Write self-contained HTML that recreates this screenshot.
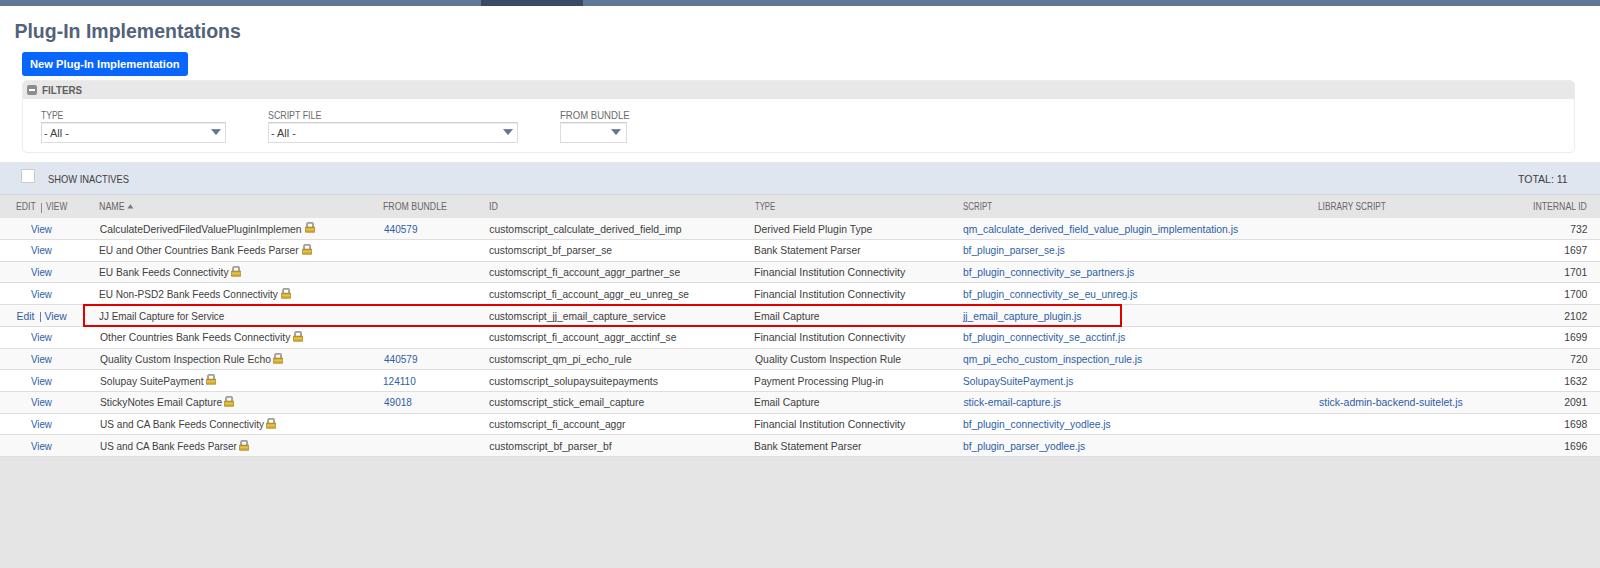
<!DOCTYPE html>
<html><head><meta charset="utf-8">
<style>
*{box-sizing:border-box;margin:0;padding:0}
html,body{width:1600px;height:568px;overflow:hidden;background:#fff;font-family:"Liberation Sans",sans-serif;color:#333}
.t{position:absolute;white-space:nowrap;line-height:20px;transform-origin:0 0}
#topbar{position:absolute;left:0;top:0;width:1600px;height:6px;background:#607799}
#topseg{position:absolute;left:481px;top:0;width:102px;height:6px;background:#3b4a63}
#btn{position:absolute;left:22px;top:52px;width:166px;height:24px;background:#0866fc;border-radius:3px}
#filters{position:absolute;left:22px;top:80px;width:1553px;height:73px;border:1px solid #ececec;border-radius:5px;background:#fff;overflow:hidden}
#fhead{position:absolute;left:0;top:0;width:100%;height:18px;background:#e8e8e8}
#minus{position:absolute;left:4px;top:4px;width:10px;height:10px;background:#8c8c8c;border-radius:2px}
#minus:after{content:"";position:absolute;left:2px;top:3.5px;width:6px;height:2px;background:#fff}
.sel{position:absolute;height:20.5px;border:1px solid #dcdcdc;border-top-color:#cfcfcf;background:#fff;box-shadow:inset 0 1px 0 #ececec}
.arr{position:absolute;top:6px;width:10px;height:6px}
#band{position:absolute;left:0;top:162px;width:1600px;height:32px;background:#e0e6ef}
#chk{position:absolute;left:21px;top:169px;width:14px;height:14px;background:#fff;border:1px solid #c9cacc;border-radius:1px}
#thead{position:absolute;left:0;top:194px;width:1600px;height:24px;background:#e5e5e5;border-top:1px solid #d3d7dd}
.row{position:absolute;left:0;width:1600px;border-bottom:1px solid #dedede}
.odd{background:#f9f9f9}
.even{background:#fff}
#rest{position:absolute;left:0;top:457px;width:1600px;height:112px;background:#e5e5e5}
#red{position:absolute;left:83px;top:304px;width:1039px;height:23px;border:2px solid #e00000}
.lk{position:absolute;width:10px;height:11px;line-height:0}
.lk svg{display:block}
#sort{position:absolute;left:127px;top:204.1px}
</style></head><body>
<div id="topbar"></div><div id="topseg"></div>
<div id="btn"></div>
<div id="filters"><div id="fhead"><div id="minus"></div></div></div>
<div class="sel" style="left:41px;top:122px;width:185px"><svg class="arr" style="left:168.6px" viewBox="0 0 10 6"><path d="M0.3 0.2H9.7L5 5.8Z" fill="#5d7393" stroke="#5d7393" stroke-width="0.4" stroke-linejoin="round"/></svg></div>
<div class="sel" style="left:268px;top:122px;width:250px"><svg class="arr" style="left:233.6px" viewBox="0 0 10 6"><path d="M0.3 0.2H9.7L5 5.8Z" fill="#5d7393" stroke="#5d7393" stroke-width="0.4" stroke-linejoin="round"/></svg></div>
<div class="sel" style="left:560px;top:122px;width:67px"><svg class="arr" style="left:49.6px" viewBox="0 0 10 6"><path d="M0.3 0.2H9.7L5 5.8Z" fill="#5d7393" stroke="#5d7393" stroke-width="0.4" stroke-linejoin="round"/></svg></div>
<div id="band"></div>
<div id="chk"></div>
<div id="thead"></div>
<div style="position:absolute;left:40.5px;top:203px;width:1.2px;height:9.6px;background:#8c8c8c"></div>
<svg id="sort" width="7" height="5" viewBox="0 0 7 5"><path d="M0.4 4.6H6.4L3.4 0.3Z" fill="#7a7a7a"/></svg>
<div class="row odd" style="top:218px;height:22px"></div>
<div class="row even" style="top:240px;height:22px"></div>
<div class="row odd" style="top:262px;height:21px"></div>
<div class="row even" style="top:283px;height:22px"></div>
<div class="row odd" style="top:305px;height:22px"></div>
<div class="row even" style="top:327px;height:22px"></div>
<div class="row odd" style="top:349px;height:21px"></div>
<div class="row even" style="top:370px;height:22px"></div>
<div class="row odd" style="top:392px;height:22px"></div>
<div class="row even" style="top:414px;height:21px"></div>
<div class="row odd" style="top:435px;height:22px"></div>
<div id="rest"></div>
<div class=t style="left:14.40px;top:20.64px;font-size:19.5px;color:#53627a;font-weight:bold;">Plug-In Implementations</div>
<div class=t style="left:30.40px;top:54.09px;font-size:11px;color:#ffffff;font-weight:bold;transform:scaleX(1.0156);">New Plug-In Implementation</div>
<div class=t style="left:42.00px;top:79.96px;font-size:10.5px;color:#5f5f5f;font-weight:bold;transform:scaleX(0.9302);">FILTERS</div>
<div class=t style="left:41.00px;top:106.06px;font-size:10.2px;color:#6b6b6b;transform:scaleX(0.8385);">TYPE</div>
<div class=t style="left:267.70px;top:106.06px;font-size:10.2px;color:#6b6b6b;transform:scaleX(0.8672);">SCRIPT FILE</div>
<div class=t style="left:559.96px;top:106.06px;font-size:10.2px;color:#6b6b6b;transform:scaleX(0.9384);">FROM BUNDLE</div>
<div class=t style="left:44.20px;top:122.89px;font-size:11px;color:#404040;transform:scaleX(0.9920);">- All -</div>
<div class=t style="left:270.90px;top:122.89px;font-size:11px;color:#404040;transform:scaleX(0.9880);">- All -</div>
<div class=t style="left:47.50px;top:170.36px;font-size:10.2px;color:#404040;transform:scaleX(0.9170);">SHOW INACTIVES</div>
<div class=t style="left:1517.50px;top:170.26px;font-size:10.2px;color:#404040;transform:scaleX(1.0333);">TOTAL: 11</div>
<div class=t style="left:16.03px;top:196.63px;font-size:10px;color:#666666;transform:scaleX(0.8682);">EDIT</div>
<div class=t style="left:46.00px;top:196.63px;font-size:10px;color:#666666;transform:scaleX(0.8308);">VIEW</div>
<div class=t style="left:99.01px;top:196.63px;font-size:10px;color:#666666;transform:scaleX(0.8893);">NAME</div>
<div class=t style="left:383.22px;top:196.63px;font-size:10px;color:#666666;transform:scaleX(0.8778);">FROM BUNDLE</div>
<div class=t style="left:488.61px;top:196.63px;font-size:10px;color:#666666;transform:scaleX(0.8889);">ID</div>
<div class=t style="left:755.10px;top:196.63px;font-size:10px;color:#666666;transform:scaleX(0.7692);">TYPE</div>
<div class=t style="left:962.70px;top:196.63px;font-size:10px;color:#666666;transform:scaleX(0.7919);">SCRIPT</div>
<div class=t style="left:1318.17px;top:196.63px;font-size:10px;color:#666666;transform:scaleX(0.8284);">LIBRARY SCRIPT</div>
<div class=t style="left:1533.33px;top:196.63px;font-size:10px;color:#666666;transform:scaleX(0.8705);">INTERNAL ID</div>
<div class=t style="left:31.30px;top:219.69px;font-size:10.4px;color:#2d5ea6;transform:scaleX(0.9348);">View</div>
<div class=t style="left:99.70px;top:219.69px;font-size:10.4px;color:#404040;">CalculateDerivedFiledValuePluginImplemen</div>
<div class=t style="left:384.10px;top:219.69px;font-size:10.4px;color:#2d5ea6;transform:scaleX(0.9650);">440579</div>
<div class=t style="left:489.30px;top:219.69px;font-size:10.4px;color:#404040;">customscript_calculate_derived_field_imp</div>
<div class=t style="left:754.00px;top:219.69px;font-size:10.4px;color:#404040;">Derived Field Plugin Type</div>
<div class=t style="left:963.40px;top:219.69px;font-size:10.4px;color:#2d5ea6;transform:scaleX(0.9946);">qm_calculate_derived_field_value_plugin_implementation.js</div>
<div class=t style="left:1570.20px;top:219.69px;font-size:10.4px;color:#404040;">732</div>
<div class=t style="left:31.30px;top:241.41px;font-size:10.4px;color:#2d5ea6;transform:scaleX(0.9348);">View</div>
<div class=t style="left:98.72px;top:241.41px;font-size:10.4px;color:#404040;transform:scaleX(0.9847);">EU and Other Countries Bank Feeds Parser</div>
<div class=t style="left:489.30px;top:241.41px;font-size:10.4px;color:#404040;transform:scaleX(0.9864);">customscript_bf_parser_se</div>
<div class=t style="left:754.01px;top:241.41px;font-size:10.4px;color:#404040;transform:scaleX(0.9925);">Bank Statement Parser</div>
<div class=t style="left:963.40px;top:241.41px;font-size:10.4px;color:#2d5ea6;transform:scaleX(0.9731);">bf_plugin_parser_se.js</div>
<div class=t style="left:1564.20px;top:241.41px;font-size:10.4px;color:#404040;">1697</div>
<div class=t style="left:31.30px;top:263.13px;font-size:10.4px;color:#2d5ea6;transform:scaleX(0.9348);">View</div>
<div class=t style="left:98.72px;top:263.13px;font-size:10.4px;color:#404040;transform:scaleX(0.9794);">EU Bank Feeds Connectivity</div>
<div class=t style="left:489.30px;top:263.13px;font-size:10.4px;color:#404040;transform:scaleX(0.9881);">customscript_fi_account_aggr_partner_se</div>
<div class=t style="left:753.98px;top:263.13px;font-size:10.4px;color:#404040;transform:scaleX(1.0189);">Financial Institution Connectivity</div>
<div class=t style="left:963.40px;top:263.13px;font-size:10.4px;color:#2d5ea6;transform:scaleX(0.9896);">bf_plugin_connectivity_se_partners.js</div>
<div class=t style="left:1564.20px;top:263.13px;font-size:10.4px;color:#404040;">1701</div>
<div class=t style="left:31.30px;top:284.85px;font-size:10.4px;color:#2d5ea6;transform:scaleX(0.9348);">View</div>
<div class=t style="left:98.73px;top:284.85px;font-size:10.4px;color:#404040;transform:scaleX(0.9679);">EU Non-PSD2 Bank Feeds Connectivity</div>
<div class=t style="left:489.30px;top:284.85px;font-size:10.4px;color:#404040;transform:scaleX(0.9779);">customscript_fi_account_aggr_eu_unreg_se</div>
<div class=t style="left:753.98px;top:284.85px;font-size:10.4px;color:#404040;transform:scaleX(1.0189);">Financial Institution Connectivity</div>
<div class=t style="left:963.40px;top:284.85px;font-size:10.4px;color:#2d5ea6;transform:scaleX(0.9749);">bf_plugin_connectivity_se_eu_unreg.js</div>
<div class=t style="left:1564.20px;top:284.85px;font-size:10.4px;color:#404040;">1700</div>
<div class=t style="left:16.60px;top:306.57px;font-size:10.4px;color:#2d5ea6;">Edit</div>
<div class=t style="left:44.50px;top:306.57px;font-size:10.4px;color:#2d5ea6;">View</div>
<div class=t style="left:98.80px;top:306.57px;font-size:10.4px;color:#404040;transform:scaleX(0.9515);">JJ Email Capture for Service</div>
<div class=t style="left:489.30px;top:306.57px;font-size:10.4px;color:#404040;transform:scaleX(0.9899);">customscript_jj_email_capture_service</div>
<div class=t style="left:754.00px;top:306.57px;font-size:10.4px;color:#404040;transform:scaleX(0.9969);">Email Capture</div>
<div class=t style="left:963.40px;top:306.57px;font-size:10.4px;color:#2d5ea6;transform:scaleX(0.9908);">jj_email_capture_plugin.js</div>
<div class=t style="left:1564.20px;top:306.57px;font-size:10.4px;color:#404040;">2102</div>
<div class=t style="left:31.30px;top:328.29px;font-size:10.4px;color:#2d5ea6;transform:scaleX(0.9348);">View</div>
<div class=t style="left:99.70px;top:328.29px;font-size:10.4px;color:#404040;transform:scaleX(0.9958);">Other Countries Bank Feeds Connectivity</div>
<div class=t style="left:489.30px;top:328.29px;font-size:10.4px;color:#404040;transform:scaleX(0.9832);">customscript_fi_account_aggr_acctinf_se</div>
<div class=t style="left:753.98px;top:328.29px;font-size:10.4px;color:#404040;transform:scaleX(1.0196);">Financial Institution Connectivity</div>
<div class=t style="left:963.40px;top:328.29px;font-size:10.4px;color:#2d5ea6;transform:scaleX(0.9824);">bf_plugin_connectivity_se_acctinf.js</div>
<div class=t style="left:1564.20px;top:328.29px;font-size:10.4px;color:#404040;">1699</div>
<div class=t style="left:31.30px;top:350.01px;font-size:10.4px;color:#2d5ea6;transform:scaleX(0.9348);">View</div>
<div class=t style="left:99.70px;top:350.01px;font-size:10.4px;color:#404040;transform:scaleX(0.9930);">Quality Custom Inspection Rule Echo</div>
<div class=t style="left:384.10px;top:350.01px;font-size:10.4px;color:#2d5ea6;transform:scaleX(0.9650);">440579</div>
<div class=t style="left:489.30px;top:350.01px;font-size:10.4px;color:#404040;transform:scaleX(0.9917);">customscript_qm_pi_echo_rule</div>
<div class=t style="left:755.00px;top:350.01px;font-size:10.4px;color:#404040;transform:scaleX(1.0041);">Quality Custom Inspection Rule</div>
<div class=t style="left:963.40px;top:350.01px;font-size:10.4px;color:#2d5ea6;transform:scaleX(0.9846);">qm_pi_echo_custom_inspection_rule.js</div>
<div class=t style="left:1570.20px;top:350.01px;font-size:10.4px;color:#404040;">720</div>
<div class=t style="left:31.30px;top:371.73px;font-size:10.4px;color:#2d5ea6;transform:scaleX(0.9348);">View</div>
<div class=t style="left:99.70px;top:371.73px;font-size:10.4px;color:#404040;transform:scaleX(0.9857);">Solupay SuitePayment</div>
<div class=t style="left:383.14px;top:371.73px;font-size:10.4px;color:#2d5ea6;transform:scaleX(0.9650);">124110</div>
<div class=t style="left:489.30px;top:371.73px;font-size:10.4px;color:#404040;transform:scaleX(1.0126);">customscript_solupaysuitepayments</div>
<div class=t style="left:754.01px;top:371.73px;font-size:10.4px;color:#404040;transform:scaleX(0.9922);">Payment Processing Plug-in</div>
<div class=t style="left:963.40px;top:371.73px;font-size:10.4px;color:#2d5ea6;transform:scaleX(0.9788);">SolupaySuitePayment.js</div>
<div class=t style="left:1564.20px;top:371.73px;font-size:10.4px;color:#404040;">1632</div>
<div class=t style="left:31.30px;top:393.45px;font-size:10.4px;color:#2d5ea6;transform:scaleX(0.9348);">View</div>
<div class=t style="left:99.70px;top:393.45px;font-size:10.4px;color:#404040;transform:scaleX(0.9886);">StickyNotes Email Capture</div>
<div class=t style="left:384.10px;top:393.45px;font-size:10.4px;color:#2d5ea6;transform:scaleX(0.9650);">49018</div>
<div class=t style="left:489.30px;top:393.45px;font-size:10.4px;color:#404040;transform:scaleX(0.9962);">customscript_stick_email_capture</div>
<div class=t style="left:754.00px;top:393.45px;font-size:10.4px;color:#404040;transform:scaleX(0.9969);">Email Capture</div>
<div class=t style="left:963.40px;top:393.45px;font-size:10.4px;color:#2d5ea6;">stick-email-capture.js</div>
<div class=t style="left:1318.80px;top:393.45px;font-size:10.4px;color:#2d5ea6;transform:scaleX(1.0120);">stick-admin-backend-suitelet.js</div>
<div class=t style="left:1564.20px;top:393.45px;font-size:10.4px;color:#404040;">2091</div>
<div class=t style="left:31.30px;top:415.17px;font-size:10.4px;color:#2d5ea6;transform:scaleX(0.9348);">View</div>
<div class=t style="left:99.70px;top:415.17px;font-size:10.4px;color:#404040;transform:scaleX(0.9698);">US and CA Bank Feeds Connectivity</div>
<div class=t style="left:489.30px;top:415.17px;font-size:10.4px;color:#404040;transform:scaleX(0.9884);">customscript_fi_account_aggr</div>
<div class=t style="left:753.98px;top:415.17px;font-size:10.4px;color:#404040;transform:scaleX(1.0196);">Financial Institution Connectivity</div>
<div class=t style="left:963.40px;top:415.17px;font-size:10.4px;color:#2d5ea6;transform:scaleX(0.9913);">bf_plugin_connectivity_yodlee.js</div>
<div class=t style="left:1564.20px;top:415.17px;font-size:10.4px;color:#404040;">1698</div>
<div class=t style="left:31.30px;top:436.89px;font-size:10.4px;color:#2d5ea6;transform:scaleX(0.9348);">View</div>
<div class=t style="left:99.70px;top:436.89px;font-size:10.4px;color:#404040;transform:scaleX(0.9559);">US and CA Bank Feeds Parser</div>
<div class=t style="left:489.30px;top:436.89px;font-size:10.4px;color:#404040;">customscript_bf_parser_bf</div>
<div class=t style="left:754.00px;top:436.89px;font-size:10.4px;color:#404040;">Bank Statement Parser</div>
<div class=t style="left:963.40px;top:436.89px;font-size:10.4px;color:#2d5ea6;transform:scaleX(0.9839);">bf_plugin_parser_yodlee.js</div>
<div class=t style="left:1564.20px;top:436.89px;font-size:10.4px;color:#404040;">1696</div>
<div class=lk style="left:304.80px;top:222.40px"><svg width="10" height="11" viewBox="0 0 10 11"><path d="M2.1 5.6V2.5Q2.1 0.9 3.6 0.9H6.6Q8.1 0.9 8.1 2.5V5.6" fill="none" stroke="#8c8c8c" stroke-width="1.9"/><path d="M2.1 5.6V2.6Q2.1 1.0 3.6 1.0H6.6Q8.1 1.0 8.1 2.6V5.6" fill="none" stroke="#c8c8c8" stroke-width="0.7"/><rect x="0.3" y="5.1" width="9.5" height="5.2" rx="0.5" fill="#c89f26" stroke="#9d7b12" stroke-width="0.6"/><rect x="0.9" y="6.6" width="8.3" height="1.1" fill="#f1d460"/><rect x="0.9" y="8.4" width="8.3" height="0.9" fill="#dcbb45"/></svg>
</div>
<div class=lk style="left:301.70px;top:244.12px"><svg width="10" height="11" viewBox="0 0 10 11"><path d="M2.1 5.6V2.5Q2.1 0.9 3.6 0.9H6.6Q8.1 0.9 8.1 2.5V5.6" fill="none" stroke="#8c8c8c" stroke-width="1.9"/><path d="M2.1 5.6V2.6Q2.1 1.0 3.6 1.0H6.6Q8.1 1.0 8.1 2.6V5.6" fill="none" stroke="#c8c8c8" stroke-width="0.7"/><rect x="0.3" y="5.1" width="9.5" height="5.2" rx="0.5" fill="#c89f26" stroke="#9d7b12" stroke-width="0.6"/><rect x="0.9" y="6.6" width="8.3" height="1.1" fill="#f1d460"/><rect x="0.9" y="8.4" width="8.3" height="0.9" fill="#dcbb45"/></svg>
</div>
<div class=lk style="left:230.90px;top:265.84px"><svg width="10" height="11" viewBox="0 0 10 11"><path d="M2.1 5.6V2.5Q2.1 0.9 3.6 0.9H6.6Q8.1 0.9 8.1 2.5V5.6" fill="none" stroke="#8c8c8c" stroke-width="1.9"/><path d="M2.1 5.6V2.6Q2.1 1.0 3.6 1.0H6.6Q8.1 1.0 8.1 2.6V5.6" fill="none" stroke="#c8c8c8" stroke-width="0.7"/><rect x="0.3" y="5.1" width="9.5" height="5.2" rx="0.5" fill="#c89f26" stroke="#9d7b12" stroke-width="0.6"/><rect x="0.9" y="6.6" width="8.3" height="1.1" fill="#f1d460"/><rect x="0.9" y="8.4" width="8.3" height="0.9" fill="#dcbb45"/></svg>
</div>
<div class=lk style="left:280.80px;top:287.56px"><svg width="10" height="11" viewBox="0 0 10 11"><path d="M2.1 5.6V2.5Q2.1 0.9 3.6 0.9H6.6Q8.1 0.9 8.1 2.5V5.6" fill="none" stroke="#8c8c8c" stroke-width="1.9"/><path d="M2.1 5.6V2.6Q2.1 1.0 3.6 1.0H6.6Q8.1 1.0 8.1 2.6V5.6" fill="none" stroke="#c8c8c8" stroke-width="0.7"/><rect x="0.3" y="5.1" width="9.5" height="5.2" rx="0.5" fill="#c89f26" stroke="#9d7b12" stroke-width="0.6"/><rect x="0.9" y="6.6" width="8.3" height="1.1" fill="#f1d460"/><rect x="0.9" y="8.4" width="8.3" height="0.9" fill="#dcbb45"/></svg>
</div>
<div class=lk style="left:292.70px;top:331.00px"><svg width="10" height="11" viewBox="0 0 10 11"><path d="M2.1 5.6V2.5Q2.1 0.9 3.6 0.9H6.6Q8.1 0.9 8.1 2.5V5.6" fill="none" stroke="#8c8c8c" stroke-width="1.9"/><path d="M2.1 5.6V2.6Q2.1 1.0 3.6 1.0H6.6Q8.1 1.0 8.1 2.6V5.6" fill="none" stroke="#c8c8c8" stroke-width="0.7"/><rect x="0.3" y="5.1" width="9.5" height="5.2" rx="0.5" fill="#c89f26" stroke="#9d7b12" stroke-width="0.6"/><rect x="0.9" y="6.6" width="8.3" height="1.1" fill="#f1d460"/><rect x="0.9" y="8.4" width="8.3" height="0.9" fill="#dcbb45"/></svg>
</div>
<div class=lk style="left:273.20px;top:352.72px"><svg width="10" height="11" viewBox="0 0 10 11"><path d="M2.1 5.6V2.5Q2.1 0.9 3.6 0.9H6.6Q8.1 0.9 8.1 2.5V5.6" fill="none" stroke="#8c8c8c" stroke-width="1.9"/><path d="M2.1 5.6V2.6Q2.1 1.0 3.6 1.0H6.6Q8.1 1.0 8.1 2.6V5.6" fill="none" stroke="#c8c8c8" stroke-width="0.7"/><rect x="0.3" y="5.1" width="9.5" height="5.2" rx="0.5" fill="#c89f26" stroke="#9d7b12" stroke-width="0.6"/><rect x="0.9" y="6.6" width="8.3" height="1.1" fill="#f1d460"/><rect x="0.9" y="8.4" width="8.3" height="0.9" fill="#dcbb45"/></svg>
</div>
<div class=lk style="left:205.80px;top:374.44px"><svg width="10" height="11" viewBox="0 0 10 11"><path d="M2.1 5.6V2.5Q2.1 0.9 3.6 0.9H6.6Q8.1 0.9 8.1 2.5V5.6" fill="none" stroke="#8c8c8c" stroke-width="1.9"/><path d="M2.1 5.6V2.6Q2.1 1.0 3.6 1.0H6.6Q8.1 1.0 8.1 2.6V5.6" fill="none" stroke="#c8c8c8" stroke-width="0.7"/><rect x="0.3" y="5.1" width="9.5" height="5.2" rx="0.5" fill="#c89f26" stroke="#9d7b12" stroke-width="0.6"/><rect x="0.9" y="6.6" width="8.3" height="1.1" fill="#f1d460"/><rect x="0.9" y="8.4" width="8.3" height="0.9" fill="#dcbb45"/></svg>
</div>
<div class=lk style="left:224.10px;top:396.16px"><svg width="10" height="11" viewBox="0 0 10 11"><path d="M2.1 5.6V2.5Q2.1 0.9 3.6 0.9H6.6Q8.1 0.9 8.1 2.5V5.6" fill="none" stroke="#8c8c8c" stroke-width="1.9"/><path d="M2.1 5.6V2.6Q2.1 1.0 3.6 1.0H6.6Q8.1 1.0 8.1 2.6V5.6" fill="none" stroke="#c8c8c8" stroke-width="0.7"/><rect x="0.3" y="5.1" width="9.5" height="5.2" rx="0.5" fill="#c89f26" stroke="#9d7b12" stroke-width="0.6"/><rect x="0.9" y="6.6" width="8.3" height="1.1" fill="#f1d460"/><rect x="0.9" y="8.4" width="8.3" height="0.9" fill="#dcbb45"/></svg>
</div>
<div class=lk style="left:265.90px;top:417.88px"><svg width="10" height="11" viewBox="0 0 10 11"><path d="M2.1 5.6V2.5Q2.1 0.9 3.6 0.9H6.6Q8.1 0.9 8.1 2.5V5.6" fill="none" stroke="#8c8c8c" stroke-width="1.9"/><path d="M2.1 5.6V2.6Q2.1 1.0 3.6 1.0H6.6Q8.1 1.0 8.1 2.6V5.6" fill="none" stroke="#c8c8c8" stroke-width="0.7"/><rect x="0.3" y="5.1" width="9.5" height="5.2" rx="0.5" fill="#c89f26" stroke="#9d7b12" stroke-width="0.6"/><rect x="0.9" y="6.6" width="8.3" height="1.1" fill="#f1d460"/><rect x="0.9" y="8.4" width="8.3" height="0.9" fill="#dcbb45"/></svg>
</div>
<div class=lk style="left:238.90px;top:439.60px"><svg width="10" height="11" viewBox="0 0 10 11"><path d="M2.1 5.6V2.5Q2.1 0.9 3.6 0.9H6.6Q8.1 0.9 8.1 2.5V5.6" fill="none" stroke="#8c8c8c" stroke-width="1.9"/><path d="M2.1 5.6V2.6Q2.1 1.0 3.6 1.0H6.6Q8.1 1.0 8.1 2.6V5.6" fill="none" stroke="#c8c8c8" stroke-width="0.7"/><rect x="0.3" y="5.1" width="9.5" height="5.2" rx="0.5" fill="#c89f26" stroke="#9d7b12" stroke-width="0.6"/><rect x="0.9" y="6.6" width="8.3" height="1.1" fill="#f1d460"/><rect x="0.9" y="8.4" width="8.3" height="0.9" fill="#dcbb45"/></svg>
</div>
<div style="position:absolute;left:39.8px;top:312px;width:1.2px;height:9.6px;background:#5a82bb"></div>

<div id="red"></div>
</body></html>
